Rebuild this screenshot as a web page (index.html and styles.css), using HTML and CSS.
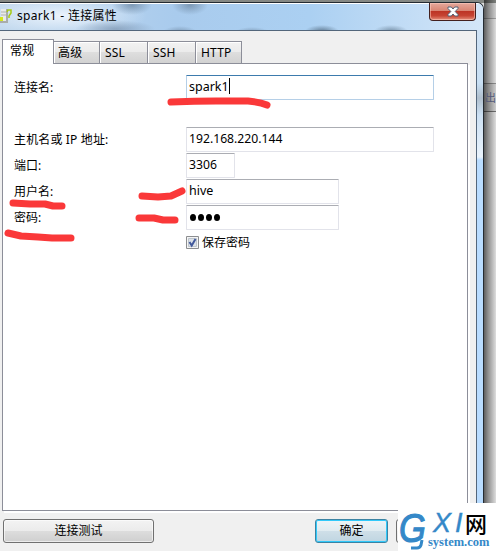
FILE: index.html
```
<!DOCTYPE html>
<html lang="zh-CN">
<head>
<meta charset="utf-8">
<title>spark1 - 连接属性</title>
<link rel="stylesheet" href="styles.css">
</head>
<body>
<div class="desktop">
  <span class="desktop-text">出</span>
  <section class="window">
    <header class="titlebar">
      <svg class="app-icon" width="13" height="18" viewBox="0 0 13 18"><path d="M1 1h7v14H0V9h1z" fill="#a9adab"/><path d="M1 1h5v12H1z" fill="#e8eae8"/><path d="M1 4h5M1 7h5" stroke="#aeb2b0"/><path d="M0 9h3v4H0" fill="#d3e81b"/><path d="M7 4l1-2h3v3L9 8v2" fill="none" stroke="#a7cb16" stroke-width="1.500"/></svg>
      <h1 class="title">spark1 - 连接属性</h1>
      <button class="close" aria-label="关闭"><svg width="12" height="11" viewBox="0 0 12 11"><path d="M1 1h3.300L6 3l1.700-2H11v1.500L8.200 5.500 11 8.500V10H7.700L6 8 4.300 10H1V8.500l2.800-3L1 2.500z" fill="#fff" stroke="#536174"/></svg></button>
    </header>
    <main class="client">
      <nav class="tabs">
        <span class="tab active">常规</span><span class="tab">高级</span><span class="tab">SSL</span><span class="tab">SSH</span><span class="tab last">HTTP</span>
      </nav>
      <div class="panel">
        <div class="row first"><label>连接名:</label><div class="field wide focus">spark1<i class="caret"></i></div></div>
        <div class="row"><label class="host">主机名或 IP 地址:</label><div class="field wide digits">192.168.220.144</div></div>
        <div class="row"><label>端口:</label><div class="field port digits">3306</div></div>
        <div class="row"><label>用户名:</label><div class="field medium">hive</div></div>
        <div class="row"><label>密码:</label><div class="field medium password"><i></i><i></i><i></i><i></i></div></div>
        <div class="remember"><svg width="13" height="13" viewBox="0 0 13 13"><path d="M.5.5h12v12H.5z" fill="#f5f5f5" stroke="#8c8e90"/><path d="M2.500 2.500h8v8h-8z" fill="#dce2e8" stroke="#bec5cc"/><path d="M3.500 6l2.200 3.500L9.500 3" fill="none" stroke="#42599c" stroke-width="2"/></svg><span>保存密码</span></div>
      </div>
      <footer class="actions"><button class="btn test">连接测试</button><button class="btn ok">确定</button><button class="btn cancel" aria-label="取消"></button></footer>
    </main>
  </section>
  <svg class="marks" width="496" height="551" viewBox="0 0 496 551">
    <path d="M171 102Q195 101 216 101T248 101Q260 102 267 105"/>
    <path d="M13 203L30 204 45 204 53 206 62 206"/>
    <path d="M8 233L21 236 38 237 52 238 71 238"/>
    <path d="M142 196L158 197 171 196 182 191"/>
    <path d="M139 218L154 218 163 220 175 220"/>
  </svg>
  <aside class="watermark">
    <span class="mark-g">G</span><span class="mark-x">X</span><span class="mark-i">I</span><span class="mark-net">网</span><span class="mark-system">system.com</span>
    <svg class="mark-tail" width="14" height="10" viewBox="0 0 14 10"><path d="M12 0L11 5Q10 8 7 8H1" fill="none" stroke="#3488c8" stroke-width="3"/></svg>
  </aside>
</div>
</body>
</html>
```
FILE: styles.css
```
* { box-sizing: border-box; }
body { margin: 0; overflow: hidden; font: 12px/18px "Noto Sans", "Noto Sans CJK SC", sans-serif; color: #000; }
.desktop { position: relative; width: 496px; height: 551px; overflow: hidden; padding-top: 2px; background:
  linear-gradient(90deg, transparent 484px, #0009 484px, #0006 488px, #0001 496px),
  linear-gradient(#858884 0 3px, #ddd 3px 18px, #aaa 18px 19px, #eee 19px 83px, #999 83px 84px, #ddd 84px 111px, #777 111px 112px, #eee 112px); }
.desktop-text { position: absolute; left: 485px; top: 89px; color: #555a78; font-size: 11px; }
.window { position: relative; width: 484px; height: 560px; border: solid #242b32; border-width: 1px 1px 0 0; border-radius: 0 7px 0 0; overflow: hidden; padding-right: 6px;
  background: linear-gradient(#d2e3f4, #c8dff3 80px, #b0bfcd 95px, #cce0f3 112px, #e9f3fc 154px, #b9dcff 157px); }
.titlebar { display: flex; align-items: flex-start; height: 27px; margin-right: -6px; border-top: 1px solid #fff; background:
  radial-gradient(ellipse 40px 9px at 115px 25px, #788faaaa, transparent),
  radial-gradient(ellipse 20px 10px at 132px 1px, #6d87a1bb, transparent),
  radial-gradient(ellipse 18px 10px at 190px 1px, #6d87a1bb, transparent),
  radial-gradient(ellipse 17px 6px at 180px 28px, #647c9499, transparent),
  radial-gradient(ellipse 17px 5px at 252px 28px, #647c9499, transparent),
  radial-gradient(ellipse 17px 6px at 322px 27px, #536c82cc, transparent),
  radial-gradient(ellipse 17px 6px at 391px 27px, #627b91bb, transparent),
  radial-gradient(ellipse 85px 20px at 62px 12px, #f3f8fedd, transparent),
  linear-gradient(90deg, #c1d8ed, #a9cbed 175px, #abd0f2 310px, #d4e6f8); }
.app-icon { margin-top: 4px; flex: none; }
.title { margin: 3px 0 0 4px; font: 12px/18px "Noto Sans", "Noto Sans CJK SC", sans-serif; white-space: nowrap; letter-spacing: .3px; }
.close { display: flex; align-items: center; justify-content: center; margin: -1px 7px 0 auto; width: 47px; height: 18px; padding: 0; border: 1px solid #43201e; border-top: 0; border-radius: 0 0 4px 4px; background: linear-gradient(#e5a89c, #d88472 47%, #bd3525 50%, #c64432 75%, #e5907c); box-shadow: inset 0 0 0 1px #ffd1c388; }
.client { width: 477px; height: 522px; padding: 8px 0 0 2px; border-top: 1px solid #53667b; border-right: 1px solid #53667b; background: #f0f0f0; }
.tabs { position: relative; display: flex; align-items: flex-end; height: 25px; margin-bottom: -1px; }
.tab { width: 48px; height: 23px; padding: 2px 0 0 5px; border: 1px solid #8c8e99; border-left: 0; box-shadow: inset 1px 1px #fff; background: linear-gradient(#f2f2f2, #ebebeb 48%, #dedede 50%, #d2d2d2); letter-spacing: .2px; }
.tab.active { width: 52px; height: 25px; padding: 2px 0 0 7px; border-left: 1px solid #8c8e99; border-bottom: 0; background: #fff; }
.tab:nth-child(2) { width: 46px; padding-left: 4px; }
.tab.last { width: 46px; }
.panel { width: 466px; height: 448px; padding: 11px 0 0 11px; border: 1px solid #8c8e99; background: #fff; box-shadow: 2px 2px #fff; }
.row { display: flex; height: 26px; }
.row.first { height: 52px; }
.row label { width: 172px; padding-top: 4px; white-space: nowrap; }
.row .host { letter-spacing: .15px; }
.field { height: 25px; padding: 2px 0 0 2px; border: 1px solid #e2e3ea; border-top-color: #abadb3; border-radius: 1px; font-size: 12.500px; white-space: nowrap; }
.wide { width: 248px; }
.medium { width: 153px; }
.port { width: 49px; }
.digits { font-size: 12.200px; }
.focus { border-color: #b5cfe7; border-top-color: #3d7bad; }
.caret { display: inline-block; width: 1px; height: 16px; vertical-align: -3px; background: #000; }
.password { display: flex; gap: 2px; padding: 8px 0 0 3px; }
.password i { width: 6px; height: 7px; border-radius: 50%; background: #000; }
.remember { display: flex; gap: 3px; margin-left: 172px; padding-top: 3px; }
.remember svg { margin-top: 2px; }
.actions { display: flex; padding: 8px 0 0 1px; }
.btn { height: 24px; padding: 0; border: 1px solid #707070; border-radius: 3px; background: linear-gradient(#f3f3f3, #ebebeb 49%, #dddddd 50%, #cfcfcf); box-shadow: inset 0 0 0 1px #fff9; font: inherit; }
.test { width: 151px; }
.ok { width: 73px; margin-left: 161px; border-color: #3b83a3; background: linear-gradient(#eef4f7, #e0ebf0 49%, #cfdfe8 50%, #bfd5e1); box-shadow: inset 0 0 0 1px #31c9fa; }
.cancel { width: 73px; margin-left: 8px; }
.marks { position: absolute; left: 0; top: 0; fill: none; stroke: #fa3839; stroke-width: 7; stroke-linecap: round; stroke-linejoin: round; }
.watermark { position: absolute; left: 398px; top: 503px; width: 98px; height: 48px; background: #fff; color: #3488c8; }
.watermark span, .mark-tail { position: absolute; white-space: nowrap; }
.mark-g { left: 1px; top: 5px; font: italic 41px/41px "Liberation Sans", sans-serif; -webkit-text-stroke: 1.200px #3488c8; transform: scaleX(.84); transform-origin: left; }
.mark-tail { left: 12px; top: 37px; }
.mark-x { left: 35px; top: 9px; font: italic 27px/22px "Liberation Sans", sans-serif; -webkit-text-stroke: .4px #3488c8; }
.mark-i { left: 57px; top: 9px; font: italic 27px/22px "Liberation Sans", sans-serif; -webkit-text-stroke: .4px #3488c8; }
.mark-net { left: 67px; top: 8px; color: #000; font: 500 22px/22px "Noto Sans CJK SC", sans-serif; }
.mark-system { left: 30px; top: 32px; font: bold 12.500px/14px "Liberation Serif", serif; }
```
